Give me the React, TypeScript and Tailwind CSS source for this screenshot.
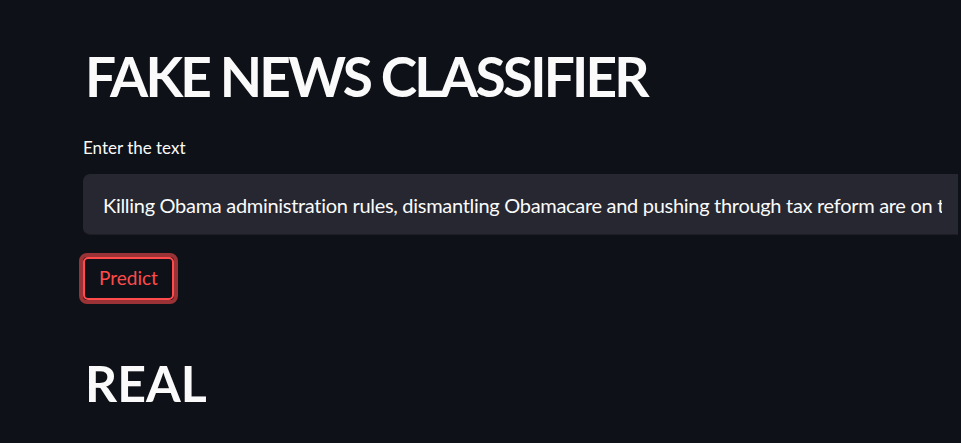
import React, { useState } from 'react';

const sample =
  'Killing Obama administration rules, dismantling Obamacare and pushing through tax reform are on the early to-do list.';

export default function App() {
  const [text, setText] = useState(sample);

  return (
    <div className="min-h-screen bg-[#0e1117] text-[#fafafa] font-['Lato',sans-serif] overflow-hidden">
      <div className="pl-[83px] pt-[44px]">
        <h1 className="text-[55px] font-bold leading-[64px] tracking-[-2.8px] pl-[2px]">FAKE NEWS CLASSIFIER</h1>

        <label className="block mt-[28px] text-[17px] leading-[24px]">Enter the text</label>
        <div className="mt-[14px] h-[61px] bg-[#262730] rounded-l-[7px] border border-[#262730] border-b-[#1d1e25] flex items-center pl-[19px] pr-[15px] mr-[3px]">
          <input
            value={text}
            onChange={(e) => setText(e.target.value)}
            className="w-full bg-transparent outline-none text-[20px] tracking-[-0.3px] text-[#fafafa]"
          />
        </div>

        <button className="mt-[18px] -ml-[4px] h-[51px] rounded-[8px] border-[4px] border-[#9b3336]">
          <span className="flex items-center h-full rounded-[5px] border-2 border-[#ff4b4b] px-[14px] text-[19px] text-[#ff4b4b]">
            Predict
          </span>
        </button>

        <h2 className="mt-[49px] text-[50px] font-bold leading-[60px] pl-[2px]">REAL</h2>
      </div>
    </div>
  );
}
